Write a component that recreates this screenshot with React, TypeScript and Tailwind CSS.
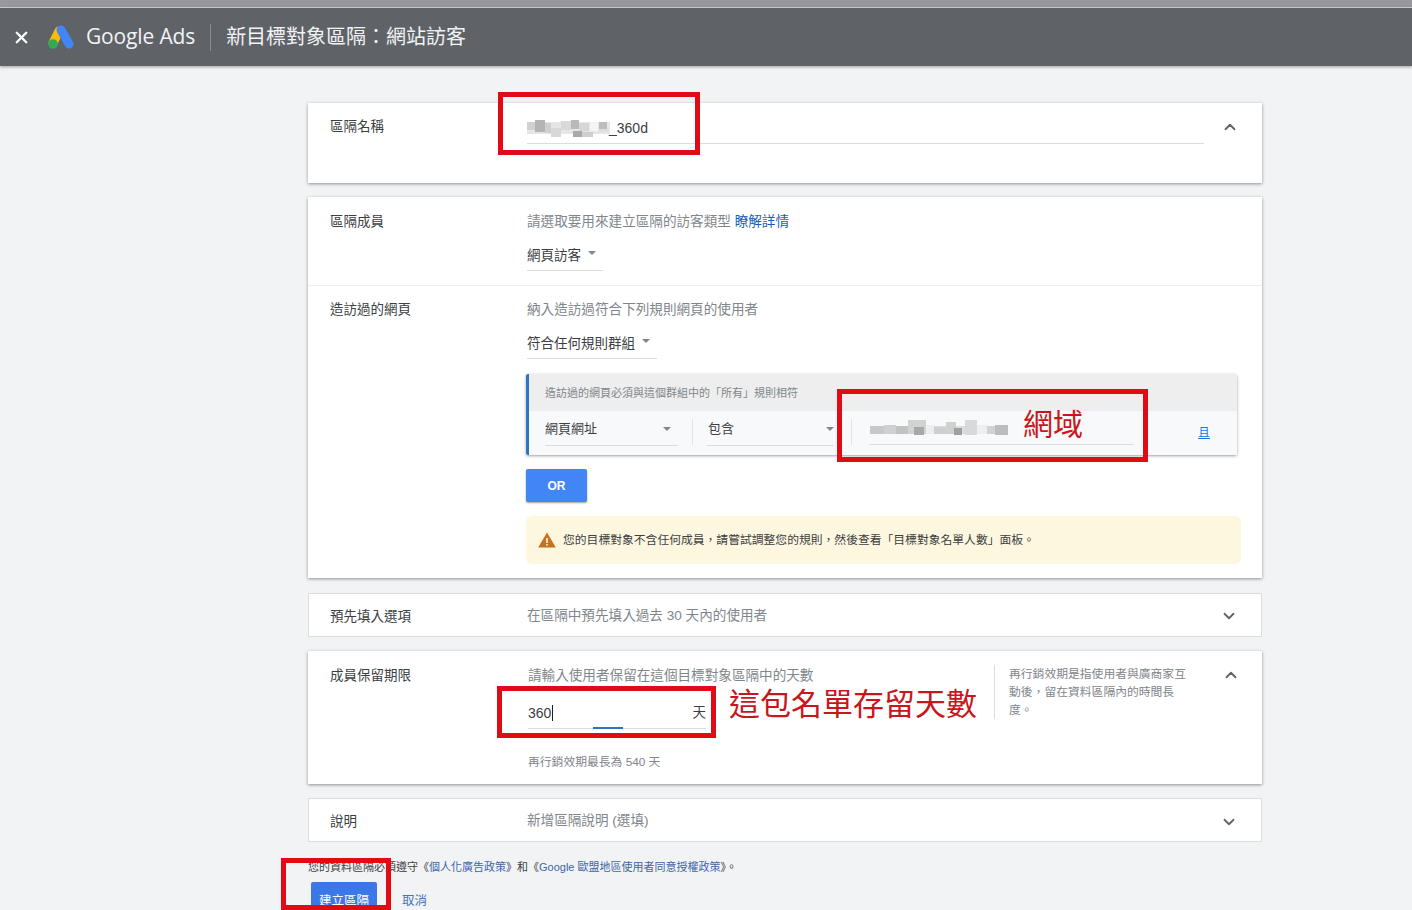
import React, { useEffect } from "react";
import { ChevronDown, ChevronUp, X } from "lucide-react";

const cjk = { fontFamily: '"Liberation Sans", "Noto Sans CJK TC", sans-serif' };

const nameMosaic = [
  [0, 2, 83, 12, "#e6e6e6"], [0, 2, 8, 8, "#d0d0d0"], [8, 0, 10, 12, "#b4b4b4"], [18, 3, 6, 10, "#cfcfcf"], [24, 8, 10, 9, "#d8d8d8"],
  [34, 1, 10, 9, "#dadada"], [44, 0, 8, 9, "#b9b9b9"], [52, 3, 10, 8, "#d6d6d6"], [46, 11, 9, 6, "#a9a9a9"],
  [55, 12, 11, 5, "#cfcfcf"], [63, 2, 8, 9, "#f4f4f4"], [72, 2, 8, 7, "#bdbdbd"], [72, 9, 10, 3, "#dedede"],
];

const domainMosaic = [
  [0, 6, 138, 8, "#dcdcdc"], [0, 6, 14, 8, "#c8c8c8"], [14, 5, 12, 9, "#d0d0d0"], [26, 6, 12, 8, "#c2c2c2"], [38, 0, 18, 14, "#d2d2d2"],
  [44, 7, 10, 8, "#a8a8a8"], [56, 5, 8, 9, "#eeeeee"], [64, 7, 12, 7, "#cfcfcf"], [76, 2, 10, 12, "#d0d0d0"], [84, 8, 8, 7, "#9f9f9f"],
  [95, 0, 12, 15, "#d9d9d9"], [107, 5, 10, 9, "#eeeeee"], [117, 6, 8, 8, "#d2d2d2"], [125, 5, 13, 10, "#bcbcbc"],
];

function Mosaic({ cells, w, h }: { cells: (string | number)[][]; w: number; h: number }) {
  return (
    <svg width={w} height={h} className="block shrink-0">
      {cells.map((c, i) => (
        <rect key={i} x={c[0]} y={c[1]} width={c[2]} height={c[3]} fill={c[4] as string} />
      ))}
    </svg>
  );
}

function Caret() {
  return <span className="block h-0 w-0 border-x-[4px] border-t-[4px] border-x-transparent border-t-[#80868b]" />;
}

function Label({ children }: { children: React.ReactNode }) {
  return <div className="w-[197px] shrink-0 pt-px text-[13.5px] leading-[20px] text-[#3c4043]">{children}</div>;
}

function Toggle({ up }: { up?: boolean }) {
  const Icon = up ? ChevronUp : ChevronDown;
  return <Icon size={18} strokeWidth={2.4} className="text-[#5f6368]" />;
}

function CollapsedRow({ label, text, shift, pad }: { label: string; text: string; shift: string; pad: string }) {
  return (
    <section className="flex h-[44px] items-center border border-[#dadce0] bg-white pl-[21px] pr-[23px]">
      <div className={pad}>
        <Label>{label}</Label>
      </div>
      <div className={`flex-1 text-[13.6px] text-[#80868b] ${pad}`}>{text}</div>
      <div className={shift}>
        <Toggle />
      </div>
    </section>
  );
}

function GoogleAdsLogo() {
  return (
    <svg width="28" height="26" viewBox="0 0 28 26" className="shrink-0">
      <line x1="12" y1="7" x2="6" y2="19" stroke="#fbbc04" strokeWidth="9" strokeLinecap="round" />
      <line x1="14" y1="6" x2="22" y2="20" stroke="#4285f4" strokeWidth="9" strokeLinecap="round" />
      <circle cx="6" cy="20" r="4.8" fill="#34a853" />
    </svg>
  );
}

function WarningIcon() {
  return (
    <svg width="18" height="16" viewBox="0 0 18 16" className="shrink-0">
      <path d="M9 0.5 L17.8 15.5 H0.2 Z" fill="#c5711f" />
      <rect x="8.2" y="6" width="1.6" height="5" fill="#fef7e0" />
      <rect x="8.2" y="12" width="1.6" height="1.6" fill="#fef7e0" />
    </svg>
  );
}

function Annotation({ className }: { className: string }) {
  return <div className={`pointer-events-none absolute border-[5px] border-[#e00b14] ${className}`} />;
}

export default function App() {
  useEffect(() => {
    document.documentElement.lang = "zh-TW";
  }, []);

  return (
    <div lang="zh-TW" className="relative h-[910px] w-[1412px] overflow-hidden bg-[#f1f3f4]" style={cjk}>
      <div className="h-[7px] bg-[#98989c]" />
      <div className="h-px bg-[#d4d4d6]" />
      <header className="flex h-[58px] items-center bg-[#5f6368] pl-[12px] text-white shadow-[0_1px_3px_rgba(0,0,0,0.35)]">
        <X size={19} strokeWidth={3} className="shrink-0" />
        <div className="ml-[16px]">
          <GoogleAdsLogo />
        </div>
        <span className="ml-[11px] text-[21px] tracking-[-0.15px] text-[#f1f3f4]" style={{ fontFamily: '"Open Sans", sans-serif' }}>
          Google Ads
        </span>
        <div className="ml-[15px] h-[27px] w-px bg-[#8a8d91]" />
        <h1 className="ml-[15px] text-[20px] font-normal text-[#f1f3f4]">{"新目標對象區隔\uFF1A網站訪客"}</h1>
      </header>

      <main className="ml-[308px] mt-[37px] flex w-[954px] flex-col">
        <section className="flex h-[80px] bg-white pl-[22px] pr-[23px] pt-[13px] shadow-[0_1px_3px_rgba(60,64,67,0.55)]">
          <Label>區隔名稱</Label>
          <div className="flex h-[28px] flex-1 items-center border-b border-[#dadce0] pb-[2px] text-[14px] text-[#3c4043]">
            <Mosaic cells={nameMosaic} w={83} h={18} />
            <span className="-ml-[1px]">_360d</span>
          </div>
          <div className="ml-[17px] pt-[2px]">
            <Toggle up />
          </div>
        </section>

        <section className="mt-[14px] h-[381px] bg-white shadow-[0_1px_3px_rgba(60,64,67,0.55)]">
          <div className="flex h-[89px] border-b border-[#eeeeee] pl-[22px] pt-[14px]">
            <Label>區隔成員</Label>
            <div className="pt-px">
              <p className="text-[13.6px] leading-[20px] text-[#80868b]">
                請選取要用來建立區隔的訪客類型 <a className="text-[#1a5fb4]">瞭解詳情</a>
              </p>
              <div className="mt-[13px] flex h-[26px] w-[76px] items-start gap-[7px] border-b border-[#dadce0] pt-px text-[13.5px] leading-[20px] text-[#3c4043]">
                網頁訪客
                <span className="pt-[5px]">
                  <Caret />
                </span>
              </div>
            </div>
          </div>

          <div className="flex pl-[22px] pr-[21px] pt-[13px]">
            <Label>造訪過的網頁</Label>
            <div className="min-w-0 flex-1">
              <p className="pt-px text-[13.6px] leading-[20px] text-[#80868b]">納入造訪過符合下列規則網頁的使用者</p>
              <div className="mt-[13px] flex h-[26px] w-[130px] items-start gap-[7px] border-b border-[#dadce0] pt-px text-[13.5px] leading-[20px] text-[#3c4043]">
                符合任何規則群組
                <span className="pt-[5px]">
                  <Caret />
                </span>
              </div>

              <div className="ml-[-1px] mt-[15px] w-[711px] rounded-[2px] border-l-[3px] border-[#2f74c0] shadow-[0_1px_3px_rgba(60,64,67,0.5)]">
                <div className="flex h-[37px] items-center bg-[#eeeeee] pl-[16px] pt-[2px] text-[11px] text-[#80868b]">
                  造訪過的網頁必須與這個群組中的「所有」規則相符
                </div>
                <div className="flex h-[44px] bg-[#f8f9fa] pl-[16px]">
                  <div className="flex h-[35px] w-[133px] items-center justify-between border-b border-[#dadce0] pr-[7px] pt-[2px] text-[13px] text-[#3c4043]">
                    網頁網址
                    <Caret />
                  </div>
                  <div className="mx-[14px] mt-[8px] h-[26px] w-px bg-[#e4e4e4]" />
                  <div className="flex h-[35px] w-[127px] items-center justify-between border-b border-[#dadce0] pl-px pt-[2px] text-[13px] text-[#3c4043]">
                    包含
                    <Caret />
                  </div>
                  <div className="mx-[17px] mt-[8px] h-[26px] w-px bg-[#e4e4e4]" />
                  <div className="flex h-[34px] w-[265px] items-center border-b border-[#dadce0] pl-px">
                    <Mosaic cells={domainMosaic} w={138} h={15} />
                  </div>
                  <a className="ml-[64px] mt-[14px] text-[12px] leading-[16px] text-[#1a73e8] underline">且</a>
                </div>
              </div>

              <button className="ml-[-1px] mt-[14px] block h-[33px] w-[61px] rounded-[2px] bg-[#4285f4] text-[12px] font-bold text-white shadow-[0_1px_2px_rgba(60,64,67,0.5)]">
                OR
              </button>

              <div className="ml-[-1px] mt-[14px] flex h-[48px] w-[715px] items-center gap-[7px] rounded-[6px] bg-[#fef7e0] pl-[12px] text-[11.8px] text-[#3c4043]">
                <WarningIcon />
                <span className="pt-px">{"您的目標對象不含任何成員\uFF0C請嘗試調整您的規則\uFF0C然後查看「目標對象名單人數」面板。"}</span>
              </div>
            </div>
          </div>
        </section>

        <div className="mt-[15px]">
          <CollapsedRow label="預先填入選項" text="在區隔中預先填入過去 30 天內的使用者" shift="pt-[2px]" pad="pt-[3px]" />
        </div>

        <section className="mt-[14px] flex h-[133px] bg-white pl-[22px] pr-[23px] pt-[14px] shadow-[0_1px_3px_rgba(60,64,67,0.55)]">
          <Label>成員保留期限</Label>
          <div className="w-[179px] pl-[1px] pt-px">
            <p className="whitespace-nowrap text-[13.6px] leading-[20px] text-[#80868b]">請輸入使用者保留在這個目標對象區隔中的天數</p>
            <div className="relative mt-[9px] flex h-[34px] items-center justify-between border-b border-[#dadce0] pt-[3px] text-[14px] text-[#3c4043]">
              <span className="flex items-center">
                360
                <span className="ml-px h-[16px] w-px bg-[#202124]" />
              </span>
              <span className="text-[13.5px]">天</span>
              <span className="absolute bottom-[-1px] left-[65px] h-[2px] w-[30px] bg-[#2f74c0]" />
            </div>
            <p className="mt-[25px] text-[11.8px] leading-[16px] text-[#80868b]">再行銷效期最長為 540 天</p>
          </div>
          <div className="ml-[288px] h-[54px] w-px shrink-0 bg-[#dadce0]" />
          <p className="ml-[14px] w-[180px] shrink-0 text-[11.8px] leading-[18px] text-[#80868b]">
            {"再行銷效期是指使用者與廣商家互動後\uFF0C留在資料區隔內的時間長度。"}
          </p>
          <div className="ml-[33px] pt-[1px]">
            <Toggle up />
          </div>
        </section>

        <div className="mt-[14px]">
          <CollapsedRow label="說明" text="新增區隔說明 (選填)" shift="pt-[3px]" pad="pt-[2px]" />
        </div>

        <p className="mt-[17px] whitespace-nowrap text-[11px] leading-[16px] text-[#3c4043]">
          您的資料區隔必須遵守《<a className="text-[#3c66a8]">個人化廣告政策</a>》和《<a className="text-[#3c66a8]">Google 歐盟地區使用者同意授權政策</a>》。
        </p>
        <div className="ml-[3px] mt-[7px] flex items-center gap-[25px]">
          <button className="h-[36px] w-[66px] rounded-[2px] bg-[#3b78e7] pt-[2px] text-[12.5px] text-white">建立區隔</button>
          <a className="pt-[2px] text-[12.5px] text-[#4a76b8]">取消</a>
        </div>
      </main>

      <Annotation className="left-[498px] top-[92px] h-[63px] w-[202px]" />
      <Annotation className="left-[837px] top-[389px] h-[73px] w-[311px]" />
      <Annotation className="left-[497px] top-[686px] h-[52px] w-[219px]" />
      <Annotation className="left-[281px] top-[858px] h-[52px] w-[110px]" />

      <span className="absolute left-[1023px] top-[403px] text-[30px] leading-[44px] text-[#c8161d]">網域</span>
      <span className="absolute left-[729px] top-[683px] whitespace-nowrap text-[31px] leading-[44px] text-[#c8161d]">這包名單存留天數</span>
    </div>
  );
}
